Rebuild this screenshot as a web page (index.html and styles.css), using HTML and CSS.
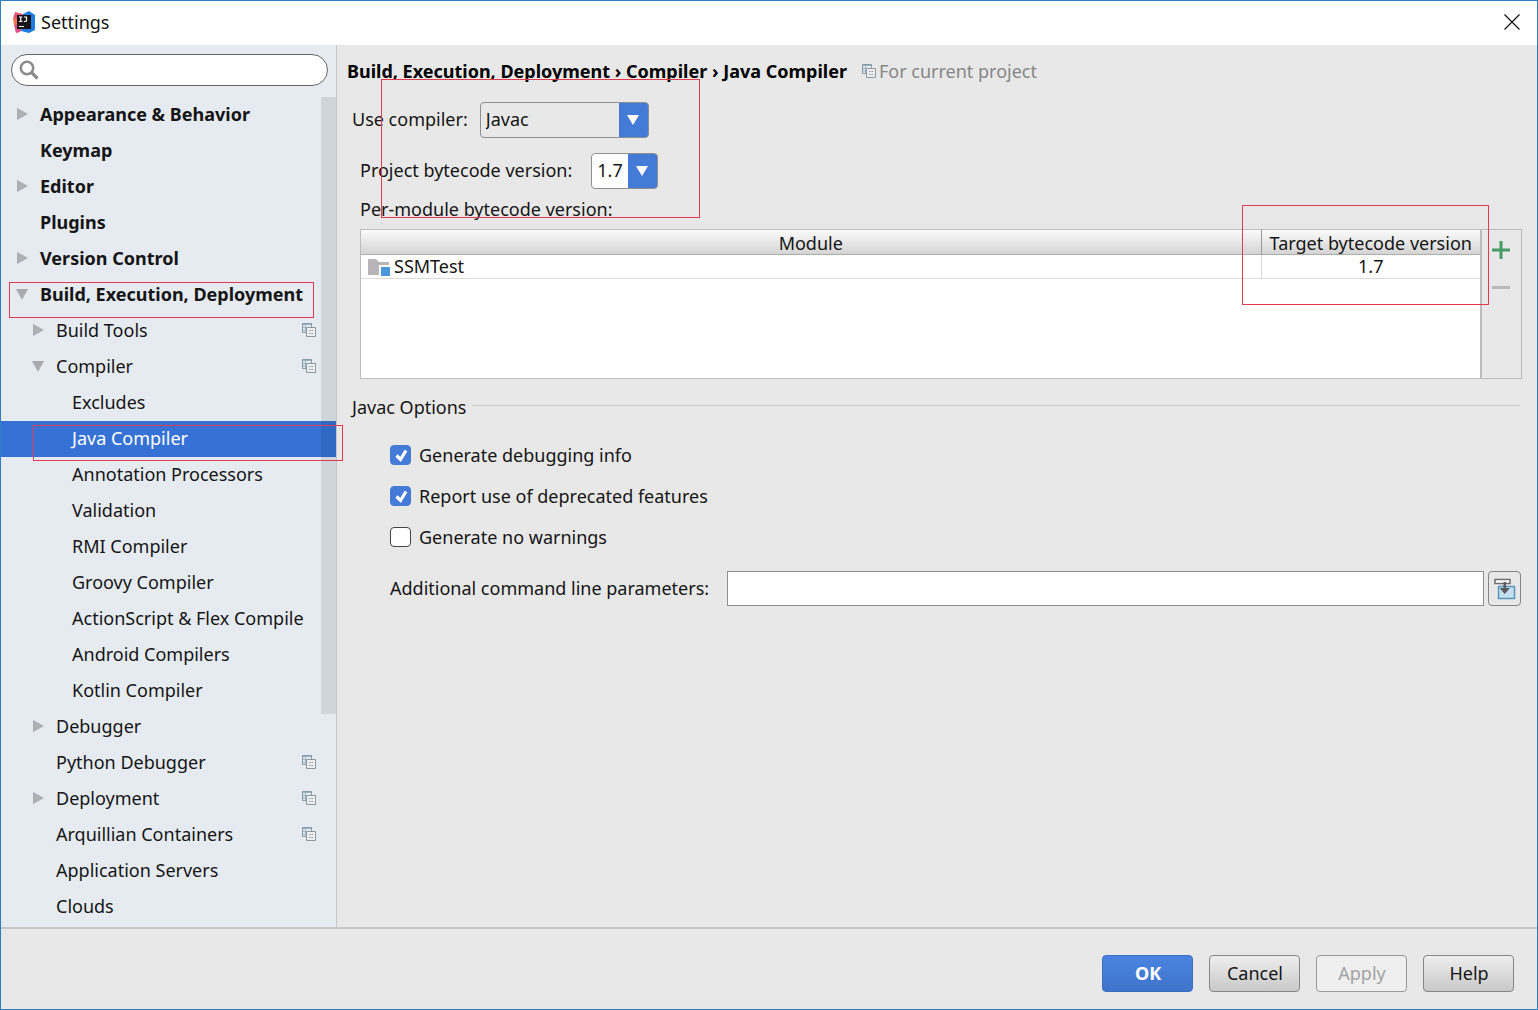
FILE: index.html
```html
<!DOCTYPE html>
<html lang="en">
<head>
<meta charset="utf-8">
<title>Settings</title>
<link rel="stylesheet" href="styles.css">
</head>
<body>
<svg class="defs" aria-hidden="true">
  <symbol id="project" viewBox="0 0 14 14">
    <path d="M1 1h9v9H1z" fill="#e3ebf2"/>
    <path d="M4.500 9.500h-4v-9h9v4" fill="none" stroke="#8499aa"/>
    <path d="M1 1.500h8M3.500 2v7M1 4.500h3M1 7h3" fill="none" stroke="#9fb2c0"/>
    <path d="M4.500 4.500h9v9h-9z" fill="#eceef0" stroke="#8f989f"/>
    <path d="M7 7.500h1.500M9.500 7.500H11M7 10.500h1.500M9.500 10.500H11" stroke="#8f989f"/>
  </symbol>
  <symbol id="right" viewBox="0 0 12 12"><path d="M1 0l11 6-11 6z" fill="#adafb2"/></symbol>
  <symbol id="down" viewBox="0 0 12 12"><path d="M0 1h12L6 12z" fill="#a9abae"/></symbol>
  <symbol id="pick" viewBox="0 0 12 10"><path d="M0 0h12L6 10z" fill="#fff"/></symbol>
</svg>
<div class="window">
  <header class="titlebar">
    <svg class="logo" viewBox="0 0 22 22" aria-hidden="true">
      <path d="M2 1l8 2-2 17-5 1.500-2-7 1-3-2-4z" fill="#ea5470"/>
      <path d="M0 7l4 1v5l-3 1z" fill="#ee7a55"/>
      <path d="M2 15l6 3-1 3-4 1z" fill="#e0508c"/>
      <path d="M10 3l6-3 6 4v15l-6 3-8-2z" fill="#1f7be0"/>
      <path d="M4 4h14v14H4z" fill="#17131a"/>
      <path d="M6 6h3.500M6 10.500h3.500M7.750 6v4.500M11 6h3M13.500 6v3.500q0 1-1.500 1h-1M6 15.500h5" fill="none" stroke="#fff" stroke-width="1.200"/>
    </svg>
    <h1>Settings</h1>
    <button class="close" aria-label="Close"><svg viewBox="0 0 16 16"><path d="M.5.500l15 15M15.500.500l-15 15" stroke="#111" stroke-width="1.200"/></svg></button>
  </header>
  <div class="main">
    <aside class="sidebar">
      <label class="search">
        <svg viewBox="0 0 20 20" aria-hidden="true"><circle cx="8" cy="8" r="6.200" fill="none" stroke="#8c8c8c" stroke-width="2.600"/><path d="M12.500 12.500l6 6" stroke="#8c8c8c" stroke-width="3.200"/></svg>
        <input type="search" aria-label="Search settings">
      </label>
      <nav class="tree">
        <a class="row top" href="#appearance"><svg class="arrow"><use href="#right"/></svg>Appearance &amp; Behavior</a>
        <a class="row top" href="#keymap"><span class="arrow"></span>Keymap</a>
        <a class="row top" href="#editor"><svg class="arrow"><use href="#right"/></svg>Editor</a>
        <a class="row top" href="#plugins"><span class="arrow"></span>Plugins</a>
        <a class="row top" href="#vcs"><svg class="arrow"><use href="#right"/></svg>Version Control</a>
        <a class="row top" href="#build"><svg class="arrow"><use href="#down"/></svg>Build, Execution, Deployment<span class="mark mark-build"></span></a>
        <a class="row sub" href="#tools"><svg class="arrow"><use href="#right"/></svg>Build Tools<svg class="scope"><use href="#project"/></svg></a>
        <a class="row sub" href="#compiler"><svg class="arrow"><use href="#down"/></svg>Compiler<svg class="scope"><use href="#project"/></svg></a>
        <a class="row leaf" href="#excludes">Excludes</a>
        <a class="row leaf selected" href="#java" aria-current="page">Java Compiler<span class="mark mark-java"></span></a>
        <a class="row leaf" href="#annotation">Annotation Processors</a>
        <a class="row leaf" href="#validation">Validation</a>
        <a class="row leaf" href="#rmi">RMI Compiler</a>
        <a class="row leaf" href="#groovy">Groovy Compiler</a>
        <a class="row leaf" href="#flex">ActionScript &amp; Flex Compile</a>
        <a class="row leaf" href="#android">Android Compilers</a>
        <a class="row leaf" href="#kotlin">Kotlin Compiler</a>
        <a class="row sub" href="#debugger"><svg class="arrow"><use href="#right"/></svg>Debugger</a>
        <a class="row sub" href="#python"><span class="arrow"></span>Python Debugger<svg class="scope"><use href="#project"/></svg></a>
        <a class="row sub" href="#deployment"><svg class="arrow"><use href="#right"/></svg>Deployment<svg class="scope"><use href="#project"/></svg></a>
        <a class="row sub" href="#arquillian"><span class="arrow"></span>Arquillian Containers<svg class="scope"><use href="#project"/></svg></a>
        <a class="row sub" href="#servers"><span class="arrow"></span>Application Servers</a>
        <a class="row sub" href="#clouds"><span class="arrow"></span>Clouds</a>
        <span class="thumb"></span>
      </nav>
    </aside>
    <main class="content">
      <h2 class="crumbs">Build, Execution, Deployment › Compiler › Java Compiler
        <span class="note"><svg><use href="#project"/></svg>For current project</span></h2>
      <div class="versions">
        <div class="field">
          <label for="compiler">Use compiler:</label>
          <span class="combo combo-wide"><select id="compiler"><option>Javac</option></select><svg><use href="#pick"/></svg></span>
        </div>
        <div class="field inset">
          <label for="bytecode">Project bytecode version:</label>
          <span class="combo combo-short"><select id="bytecode"><option>1.7</option></select><svg><use href="#pick"/></svg></span>
        </div>
        <p class="caption inset" id="modules">Per-module bytecode version:</p>
        <span class="mark mark-versions"></span>
      </div>
      <div class="panel">
        <div class="listing">
          <table aria-labelledby="modules">
            <thead><tr><th>Module</th><th class="target">Target bytecode version</th></tr></thead>
            <tbody><tr><td><span class="module"><svg viewBox="0 0 24 18" aria-hidden="true"><path d="M1 1h8l3 3h10v13H1z" fill="#b9b4b8"/><path d="M12 7h12v11H12z" fill="#fff"/><path d="M14 9h9v9h-9z" fill="#4b97dc"/></svg>SSMTest</span></td><td class="target">1.7</td></tr></tbody>
          </table>
        </div>
        <div class="tools">
          <button aria-label="Add"><svg viewBox="0 0 18 18"><path d="M9 0v18M0 9h18" stroke="#469a64" stroke-width="3"/></svg></button>
          <button aria-label="Remove" disabled><svg viewBox="0 0 18 18"><path d="M0 8.500h18" stroke="#b9b9b9" stroke-width="3"/></svg></button>
        </div>
        <span class="mark mark-target"></span>
      </div>
      <fieldset>
        <legend>Javac Options</legend>
        <label class="check"><input type="checkbox" checked>Generate debugging info</label>
        <label class="check"><input type="checkbox" checked>Report use of deprecated features</label>
        <label class="check"><input type="checkbox">Generate no warnings</label>
        <div class="params">
          <label for="params">Additional command line parameters:</label>
          <input id="params" type="text">
          <button aria-label="Expand"><svg viewBox="0 0 22 22"><path d="M5 9h15v12H5z" fill="#c4e0f0"/><path d="M4 8.500h16.500v12H4.500V8" fill="none" stroke="#5795bb" stroke-width="1.500"/><path d="M1 1.500h15v4H1z" fill="#fff" stroke="#6e6e6e" stroke-width="1.500"/><path d="M9.500 4h2.500v6h4l-5.250 6-5.250-6h4z" fill="#5a5d60"/></svg></button>
        </div>
      </fieldset>
    </main>
  </div>
  <footer class="actions">
    <button class="primary">OK</button>
    <button>Cancel</button>
    <button disabled>Apply</button>
    <button>Help</button>
  </footer>
</div>
</body>
</html>
```
FILE: styles.css
```css
* { box-sizing: border-box; }
body { margin: 0; font: 18px/24px "Noto Sans", "Open Sans", sans-serif; color: #151515; }
button, input, select { font: inherit; color: inherit; margin: 0; }
h1, h2, p { margin: 0; font-size: inherit; font-weight: 400; }
svg { flex: none; display: block; }
.defs { position: absolute; width: 0; height: 0; }

.window { min-height: 100vh; display: flex; flex-direction: column; background: #e8e8e8; border: 1px solid #2e7fbf; }
.titlebar { display: flex; align-items: center; height: 44px; padding: 0 17px 2px 12px; background: #fff; }
.logo { width: 22px; height: 22px; margin-right: 6px; }
.close { margin-left: auto; padding: 0; border: 0; background: none; }
.close svg { width: 16px; height: 16px; }

.main { flex: 1; display: flex; border-bottom: 2px solid #c6c6c6; }
.sidebar { flex: none; width: 336px; background: #e6ebf1; border-right: 1px solid #c4c6c9; }
.search { display: flex; align-items: center; height: 32px; margin: 9px 8px 11px 10px; padding-left: 7px; background: #fff; border: 1px solid #666; border-radius: 16px; }
.search svg { width: 20px; height: 20px; }
.search input { flex: 1; min-width: 0; border: 0; background: none; outline: 0; }
.tree { position: relative; }
.row { position: relative; display: flex; align-items: center; height: 36px; padding: 0 20px 2px 0; color: inherit; text-decoration: none; white-space: nowrap; }
.top { padding-left: 15px; font-weight: 700; }
.sub { padding-left: 31px; }
.leaf { padding-left: 71px; }
.selected { background: #3672d6; color: #fff; }
.arrow { width: 12px; height: 12px; margin-right: 12px; }
.scope { width: 14px; height: 14px; margin-left: auto; }
.thumb { position: absolute; top: 0; right: 0; width: 15px; height: 617px; background: rgba(0, 20, 30, .1); }

.mark { position: absolute; z-index: 1; border: 1px solid #e23b4e; pointer-events: none; }
.mark-build { left: 8px; top: 5px; width: 305px; height: 36px; }
.mark-java { left: 32px; top: 4px; width: 310px; height: 36px; }
.mark-versions { left: 29px; top: -23px; width: 319px; height: 139px; }
.mark-target { right: 32px; top: -25px; width: 247px; height: 100px; }

.content { flex: 1; min-width: 0; padding: 14px 15px 20px; }
.crumbs { display: flex; align-items: center; margin-left: -5px; font-weight: 700; color: #000; }
.note { display: flex; align-items: center; margin-left: 15px; font-weight: 400; color: #868686; }
.note svg { width: 14px; height: 14px; margin-right: 3px; }
.versions { position: relative; margin-top: 19px; }
.field { display: flex; align-items: center; margin-bottom: 15px; }
.field label, .params label { padding-bottom: 2px; }
.inset { margin-left: 8px; }
.combo { position: relative; height: 36px; }
.combo select { appearance: none; width: 100%; height: 36px; padding: 0 5px 2px; border: 1px solid #8f8f8f; border-radius: 4px; background: linear-gradient(#437bd6, #437bd6) right / 30px no-repeat border-box #e8e8e8; }
.combo svg { position: absolute; right: 10px; top: 13px; width: 12px; height: 10px; pointer-events: none; }
.combo-wide { width: 169px; margin-left: 12px; }
.combo-short { width: 67px; margin-left: 19px; }
.combo-short select { background-color: #fff; }
.caption { margin-top: -7px; }

.panel { position: relative; display: flex; height: 150px; margin: 8px 0 0 8px; border: 1px solid #bcbcbc; }
.listing { flex: 1; background: #fff; border-right: 2px solid #bdbdbd; }
table { width: 100%; border-collapse: collapse; table-layout: fixed; line-height: 23px; }
th, td { height: 24px; padding: 0; font-weight: 400; text-align: center; white-space: nowrap; }
th { padding-top: 2px; line-height: 22px; background: linear-gradient(#fbfbfb, #d4d4d4); border-bottom: 1px solid #adadad; }
td { border-bottom: 1px solid #dcdcdc; }
.target { width: 219px; border-left: 1px solid #dcdcdc; }
th.target { border-left-color: #999; }
.module { display: flex; align-items: center; padding-left: 6px; }
.module svg { width: 24px; height: 18px; margin-right: 3px; }
.tools { width: 39px; padding: 11px 0 0 10px; }
.tools button { display: block; margin-bottom: 20px; padding: 0; border: 0; background: none; }
.tools svg { width: 18px; height: 18px; }

fieldset { min-width: 0; margin: 12px 2px 0 0; padding: 24px 0 0 38px; border: 0; border-top: 1px solid #c9c9c9; }
legend { margin-left: -38px; padding: 4px 6px 0 0; }
.check { display: flex; align-items: center; height: 24px; margin-bottom: 17px; }
.check input { appearance: none; width: 21px; height: 20px; margin-right: 8px; border: 1px solid #444; border-radius: 4px; background: #fff; }
.check input:checked { border-color: #437bd6; background: #437bd6 url("data:image/svg+xml,%3Csvg xmlns='http://www.w3.org/2000/svg' viewBox='0 0 19 18'%3E%3Cpath d='M5.500 9.500l4 4L15 4.500' fill='none' stroke='white' stroke-width='3.200'/%3E%3C/svg%3E") center / 19px 18px no-repeat; }
.params { display: flex; align-items: center; margin: 22px -1px 0 0; }
.params input { flex: 1; min-width: 0; height: 35px; margin: 0 4px 0 18px; padding: 0 6px; border: 1px solid #8f8f8f; background: #fff; }
.params button { display: grid; place-items: center; width: 33px; height: 35px; padding: 0; border: 1px solid #858585; border-radius: 4px; background: #e8e8e8; }
.params svg { width: 22px; height: 22px; }

.actions { display: flex; justify-content: flex-end; gap: 16px; height: 80px; padding: 26px 23px 0 0; }
.actions button { width: 91px; height: 37px; padding: 0 0 2px 1px; border: 1px solid #868686; border-radius: 4px; background: linear-gradient(#eee, #c9c9c9); }
.actions .primary { border-color: #3d6fc0; background: linear-gradient(#4a84e0, #4074cc); color: #fff; font-weight: 700; }
.actions button:disabled { border-color: #999; background: #efefef; color: #a3a3a3; }
```
